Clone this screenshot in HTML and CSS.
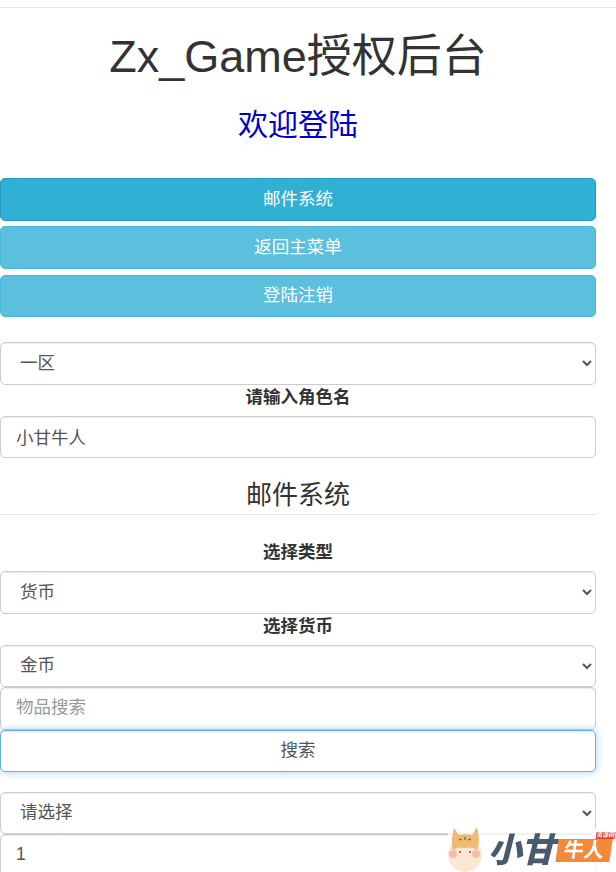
FILE: index.html
```html
<!DOCTYPE html>
<html lang="zh-CN">
<head>
    <meta charset="UTF-8">
    <meta name="viewport" content="width=device-width, initial-scale=1.0">
    <title>Zx_Game授权后台</title>
    <link rel="stylesheet" href="styles.css">
</head>
<body>
    <div class="container">
        <hr class="top-line">
        <h1>Zx_Game授权后台</h1>
        <h2>欢迎登陆</h2>

        <div class="btn-group">
            <button class="btn btn-active">邮件系统</button>
            <button class="btn">返回主菜单</button>
            <button class="btn">登陆注销</button>
        </div>

        <select class="form-control server-select">
            <option>一区</option>
        </select>
        <label>请输入角色名</label>
        <input class="form-control" type="text" value="小甘牛人">

        <h3>邮件系统</h3>
        <hr class="title-line">

        <label class="first-label">选择类型</label>
        <select class="form-control">
            <option>货币</option>
        </select>
        <label>选择货币</label>
        <select class="form-control">
            <option>金币</option>
        </select>
        <input class="form-control" type="text" placeholder="物品搜索">
        <button class="btn-search">搜索</button>

        <select class="form-control item-select">
            <option>请选择</option>
        </select>
        <input class="form-control" type="text" value="1">
    </div>

    <!-- 水印 -->
    <div class="watermark">
        <svg class="cat" width="40" height="46" viewBox="0 0 40 46">
            <circle cx="17" cy="29" r="17" fill="#fbe8d3"/>
            <path d="M5 25 C3 17 4 9 6 2 L11 9 C15 8 20 8 24 9 L29 1 C31 9 32 17 29 25 C25 20 21 22 17 22 C13 22 9 20 5 25Z" fill="#efbb72"/>
            <circle cx="5" cy="28" r="4" fill="#f6bdae"/>
            <circle cx="28" cy="28" r="4" fill="#f6bdae"/>
            <circle cx="12" cy="26" r="1" fill="#6b5a50"/>
            <circle cx="22" cy="26" r="1" fill="#6b5a50"/>
            <path d="M11 13l3 1M23 13l-3 1M17 11v3" stroke="#7a5a3a" stroke-width="1.2" fill="none"/>
        </svg>
        <span class="wm-name">小甘</span>
        <span class="wm-badge">牛人<span class="wm-tag">资源网</span></span>
    </div>
</body>
</html>
```

FILE: styles.css
```css
* {
    box-sizing: border-box;
}
body {
    font-family: "Liberation Sans", "Noto Sans CJK SC", sans-serif;
    font-size: 17.5px;
    line-height: 25px;
    margin: 0;
    background-color: #fff;
    color: #333;
}
.container {
    width: 596px;
    text-align: center;
}
hr {
    border: none;
    border-top: 1px solid #e6e6e6;
    margin: 0;
}
.top-line {
    width: 616px;
    margin-top: 7px;
}
h1 {
    margin: 24px 0 0;
    font-size: 45px;
    line-height: 49.5px;
    font-weight: 400;
}
h2 {
    margin: 26px 0 0;
    font-size: 30px;
    line-height: 33px;
    font-weight: 400;
    color: #0000cd;
}
h3 {
    margin: 22.5px 0 0;
    font-size: 26px;
    line-height: 28.5px;
    font-weight: 400;
}
.title-line {
    margin-top: 5px;
}
.btn-group {
    margin-top: 37.5px;
    display: flex;
    flex-direction: column;
    gap: 5.75px;
}
.btn {
    height: 42.5px;
    width: 100%;
    font: inherit;
    color: #fff;
    background-color: #5bc0de;
    border: 1px solid #46b8da;
    border-radius: 5px;
}
.btn-active {
    background-color: #31b0d5;
    border-color: #269abc;
}
label {
    display: block;
    font-weight: 700;
    margin-bottom: 6px;
}
.first-label {
    margin-top: 25px;
}
.form-control {
    display: block;
    width: 100%;
    height: 42.5px;
    padding: 7px 15px 8px;
    font: inherit;
    color: #555;
    background-color: #fff;
    border: 1.25px solid #ccc;
    border-radius: 5px;
    box-shadow: inset 0 1px 1px rgba(0, 0, 0, .075);
}
.form-control::placeholder {
    color: #999;
}
.server-select {
    margin-top: 25px;
}
.btn-search {
    display: block;
    width: 100%;
    height: 42.5px;
    font: inherit;
    color: #555;
    background-color: #fff;
    border: 1.25px solid #66afe9;
    border-radius: 5px;
    box-shadow: inset 0 1px 1px rgba(0, 0, 0, .075), 0 0 8px rgba(102, 175, 233, .6);
    position: relative;
}
.item-select {
    margin-top: 19.5px;
}
.watermark {
    position: fixed;
    right: 0;
    bottom: 0;
    width: 168px;
    height: 44px;
    display: flex;
    align-items: center;
    background-color: rgba(255, 255, 255, .75);
}
.cat {
    flex: none;
    margin-top: -2px;
}
.wm-name {
    font-size: 34px;
    line-height: 36px;
    font-weight: 900;
    font-style: italic;
    color: #4a5a6e;
    white-space: nowrap;
    letter-spacing: -1px;
}
.wm-badge {
    position: relative;
    flex: none;
    width: 54px;
    height: 23px;
    margin-left: 3px;
    background-color: #f5893a;
    color: #fff;
    font-size: 20px;
    line-height: 23px;
    font-weight: 700;
    text-align: center;
    transform: skewX(-8deg);
}
.wm-tag {
    position: absolute;
    right: -2px;
    top: -7px;
    width: 19px;
    height: 7px;
    background-color: #e8392f;
    font-size: 6px;
    line-height: 7px;
    white-space: nowrap;
}
```
